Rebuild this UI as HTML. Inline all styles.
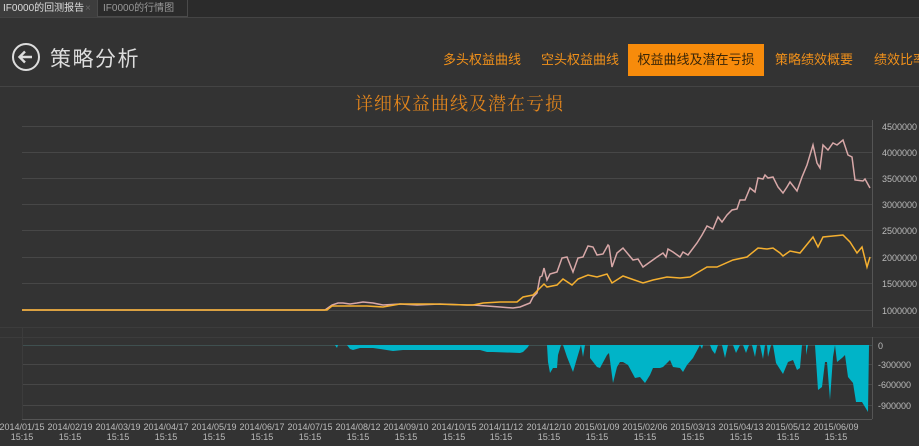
<!DOCTYPE html>
<html><head><meta charset="utf-8"><style>
html,body{margin:0;padding:0;width:919px;height:446px;overflow:hidden;background:#333;font-family:"Liberation Sans","Noto Sans CJK SC",sans-serif}
.tabs{position:absolute;left:0;top:0;width:919px;height:17px;background:#2b2b2b;border-bottom:1px solid #444}
.t{position:absolute;top:0;height:17px;font-size:10px;line-height:17px;color:#bbb;padding-left:5px;white-space:nowrap;overflow:hidden}
.nav{position:absolute;top:44px;height:32px;line-height:32px;font-size:13px;color:#f0901a;white-space:nowrap}
</style></head><body>
<div class="tabs">
<div class="t" style="left:0;width:94px;background:#3d3d3d;color:#ddd;padding-left:3px">IF0000的回测报告<span style="color:#666;position:absolute;left:85px">×</span></div>
<div class="t" style="left:97px;width:84px;border:1px solid #4a4a4a;border-top:none;height:16px;color:#999">IF0000的行情图</div>
</div>
<svg style="position:absolute;left:11px;top:42px" width="30" height="30"><circle cx="15" cy="15" r="13" fill="none" stroke="#ddd" stroke-width="2"/><path d="M21 15H9M14 9.5L8.5 15L14 20.5" fill="none" stroke="#ddd" stroke-width="2.4"/></svg>
<div style="position:absolute;left:50px;top:43px;font-size:21px;color:#ddd;letter-spacing:1.5px;white-space:nowrap">策略分析</div>
<div class="nav" style="left:443px">多头权益曲线</div>
<div class="nav" style="left:541px">空头权益曲线</div>
<div class="nav" style="left:628px;width:136px;background:#f78b0b;color:#3a2608;text-align:center">权益曲线及潜在亏损</div>
<div class="nav" style="left:775px">策略绩效概要</div>
<div class="nav" style="left:874px">绩效比率</div>
<div style="position:absolute;left:0;top:86px;width:919px;height:1px;background:#444"></div>
<div style="position:absolute;left:0;top:90px;width:919px;text-align:center;font-size:18px;color:#e0841c;letter-spacing:1px;font-family:'Liberation Serif','Noto Serif CJK SC',serif">详细权益曲线及潜在亏损</div>
<svg style="position:absolute;left:0;top:0" width="919" height="446" font-family="Liberation Sans, sans-serif" font-size="9" fill="#bbb">
<g stroke="#474747" stroke-width="1">
<line x1="22" y1="126.5" x2="872" y2="126.5"/><line x1="22" y1="152.5" x2="872" y2="152.5"/><line x1="22" y1="178.5" x2="872" y2="178.5"/><line x1="22" y1="204.5" x2="872" y2="204.5"/><line x1="22" y1="230.5" x2="872" y2="230.5"/><line x1="22" y1="257.5" x2="872" y2="257.5"/><line x1="22" y1="283.5" x2="872" y2="283.5"/><line x1="22" y1="310.5" x2="872" y2="310.5"/>
<line x1="22" y1="364.5" x2="872" y2="364.5"/><line x1="22" y1="384.5" x2="872" y2="384.5"/><line x1="22" y1="405.5" x2="872" y2="405.5"/>
<line x1="0" y1="327.5" x2="919" y2="327.5" stroke="#3c3c3c"/><line x1="0" y1="337.5" x2="919" y2="337.5" stroke="#3c3c3c"/>
<line x1="22" y1="345.5" x2="872" y2="345.5" stroke="#3f5050"/>
<line x1="22.5" y1="327" x2="22.5" y2="419" stroke="#3c3c3c"/>
<line x1="872.5" y1="120" x2="872.5" y2="327" stroke="#555"/><line x1="872.5" y1="337" x2="872.5" y2="419" stroke="#555"/>
<line x1="22" y1="419.5" x2="872" y2="419.5" stroke="#555"/>
</g>
<g text-anchor="start">
<text x="882" y="130">4500000</text><text x="882" y="156">4000000</text><text x="882" y="182">3500000</text><text x="882" y="208">3000000</text><text x="882" y="234">2500000</text><text x="882" y="261">2000000</text><text x="882" y="287">1500000</text><text x="882" y="314">1000000</text>
<text x="878" y="349">0</text><text x="878" y="368">-300000</text><text x="878" y="388">-600000</text><text x="878" y="409">-900000</text>
</g>
<path fill="#00b4c8" d="M335 345L337 348L338 345L347 345L350 349L353 350L360 348L367 348L373 348L380 349L393 351L403 350L420 350L453 350L480 350L487 352L493 352L520 353L523 352L528 347L529 345L547 345L548 362L550 373L553 368L557 368L558 355L561 345L563 345L567 357L573 372L578 355L581 345L583 357L585 345L590 345L590 358L597 367L600 368L607 355L609 353L613 383L617 367L620 362L623 362L628 365L635 378L640 377L645 383L650 375L653 368L660 368L663 367L670 360L673 367L680 368L683 372L687 365L693 358L700 345L702 349L703 345L710 345L712 350L715 354L718 345L722 345L725 358L728 345L733 345L736 353L740 345L743 345L746 353L749 345L752 345L755 357L757 345L760 345L763 359L765 345L767 345L768 357L771 345L773 345L776 363L783 374L788 362L793 360L797 370L800 368L802 345L806 345L806 355L808 345L815 345L818 390L822 387L825 362L827 362L830 400L833 357L835 345L837 362L842 358L845 355L848 377L853 383L856 402L862 402L868 412L869 345Z"/>
<polyline fill="none" stroke="#d8a8a8" stroke-width="1.5" points="22,310 325,310 332,305 338,303 343,303 350,304 357,303 363,302 373,303 383,305 400,304 417,305 440,304 467,305 473,305 487,306 500,307 513,308 520,307 530,303 533,297 537,293 540,277 542,276 544,268 547,280 550,274 557,272 562,258 567,257 573,272 578,258 583,257 588,246 593,247 597,255 603,254 608,245 609,246 612,267 617,253 623,248 633,260 638,259 643,267 650,262 657,257 663,253 666,257 668,249 673,252 680,257 683,252 688,255 697,243 702,235 707,226 713,229 718,217 722,222 727,215 732,210 737,209 740,200 745,200 750,188 755,192 758,178 763,179 765,175 768,178 773,177 778,187 783,193 787,187 790,182 797,191 802,177 807,165 813,145 817,163 820,168 823,145 828,150 833,143 837,145 843,140 848,155 852,157 855,180 863,181 865,179 870,188"/>
<polyline fill="none" stroke="#f5b030" stroke-width="1.5" points="22,310 327,310 332,306 350,306 367,306 383,307 400,304 433,304 467,305 473,305 483,303 500,302 517,302 523,297 533,295 540,288 544,284 547,287 557,285 563,279 572,285 578,279 588,275 597,277 607,274 612,283 623,276 643,283 653,280 667,277 680,278 690,277 707,267 717,267 733,260 747,257 758,248 767,249 773,248 780,253 783,256 790,251 800,253 813,237 818,247 823,237 843,235 850,242 857,253 862,247 867,267 870,257"/>
<g text-anchor="middle">
<text x="22" y="430">2014/01/15</text><text x="22" y="440">15:15</text>
<text x="70" y="430">2014/02/19</text><text x="70" y="440">15:15</text>
<text x="118" y="430">2014/03/19</text><text x="118" y="440">15:15</text>
<text x="166" y="430">2014/04/17</text><text x="166" y="440">15:15</text>
<text x="214" y="430">2014/05/19</text><text x="214" y="440">15:15</text>
<text x="262" y="430">2014/06/17</text><text x="262" y="440">15:15</text>
<text x="310" y="430">2014/07/15</text><text x="310" y="440">15:15</text>
<text x="358" y="430">2014/08/12</text><text x="358" y="440">15:15</text>
<text x="406" y="430">2014/09/10</text><text x="406" y="440">15:15</text>
<text x="454" y="430">2014/10/15</text><text x="454" y="440">15:15</text>
<text x="501" y="430">2014/11/12</text><text x="501" y="440">15:15</text>
<text x="549" y="430">2014/12/10</text><text x="549" y="440">15:15</text>
<text x="597" y="430">2015/01/09</text><text x="597" y="440">15:15</text>
<text x="645" y="430">2015/02/06</text><text x="645" y="440">15:15</text>
<text x="693" y="430">2015/03/13</text><text x="693" y="440">15:15</text>
<text x="741" y="430">2015/04/13</text><text x="741" y="440">15:15</text>
<text x="788" y="430">2015/05/12</text><text x="788" y="440">15:15</text>
<text x="836" y="430">2015/06/09</text><text x="836" y="440">15:15</text>
</g>
</svg>
</body></html>
